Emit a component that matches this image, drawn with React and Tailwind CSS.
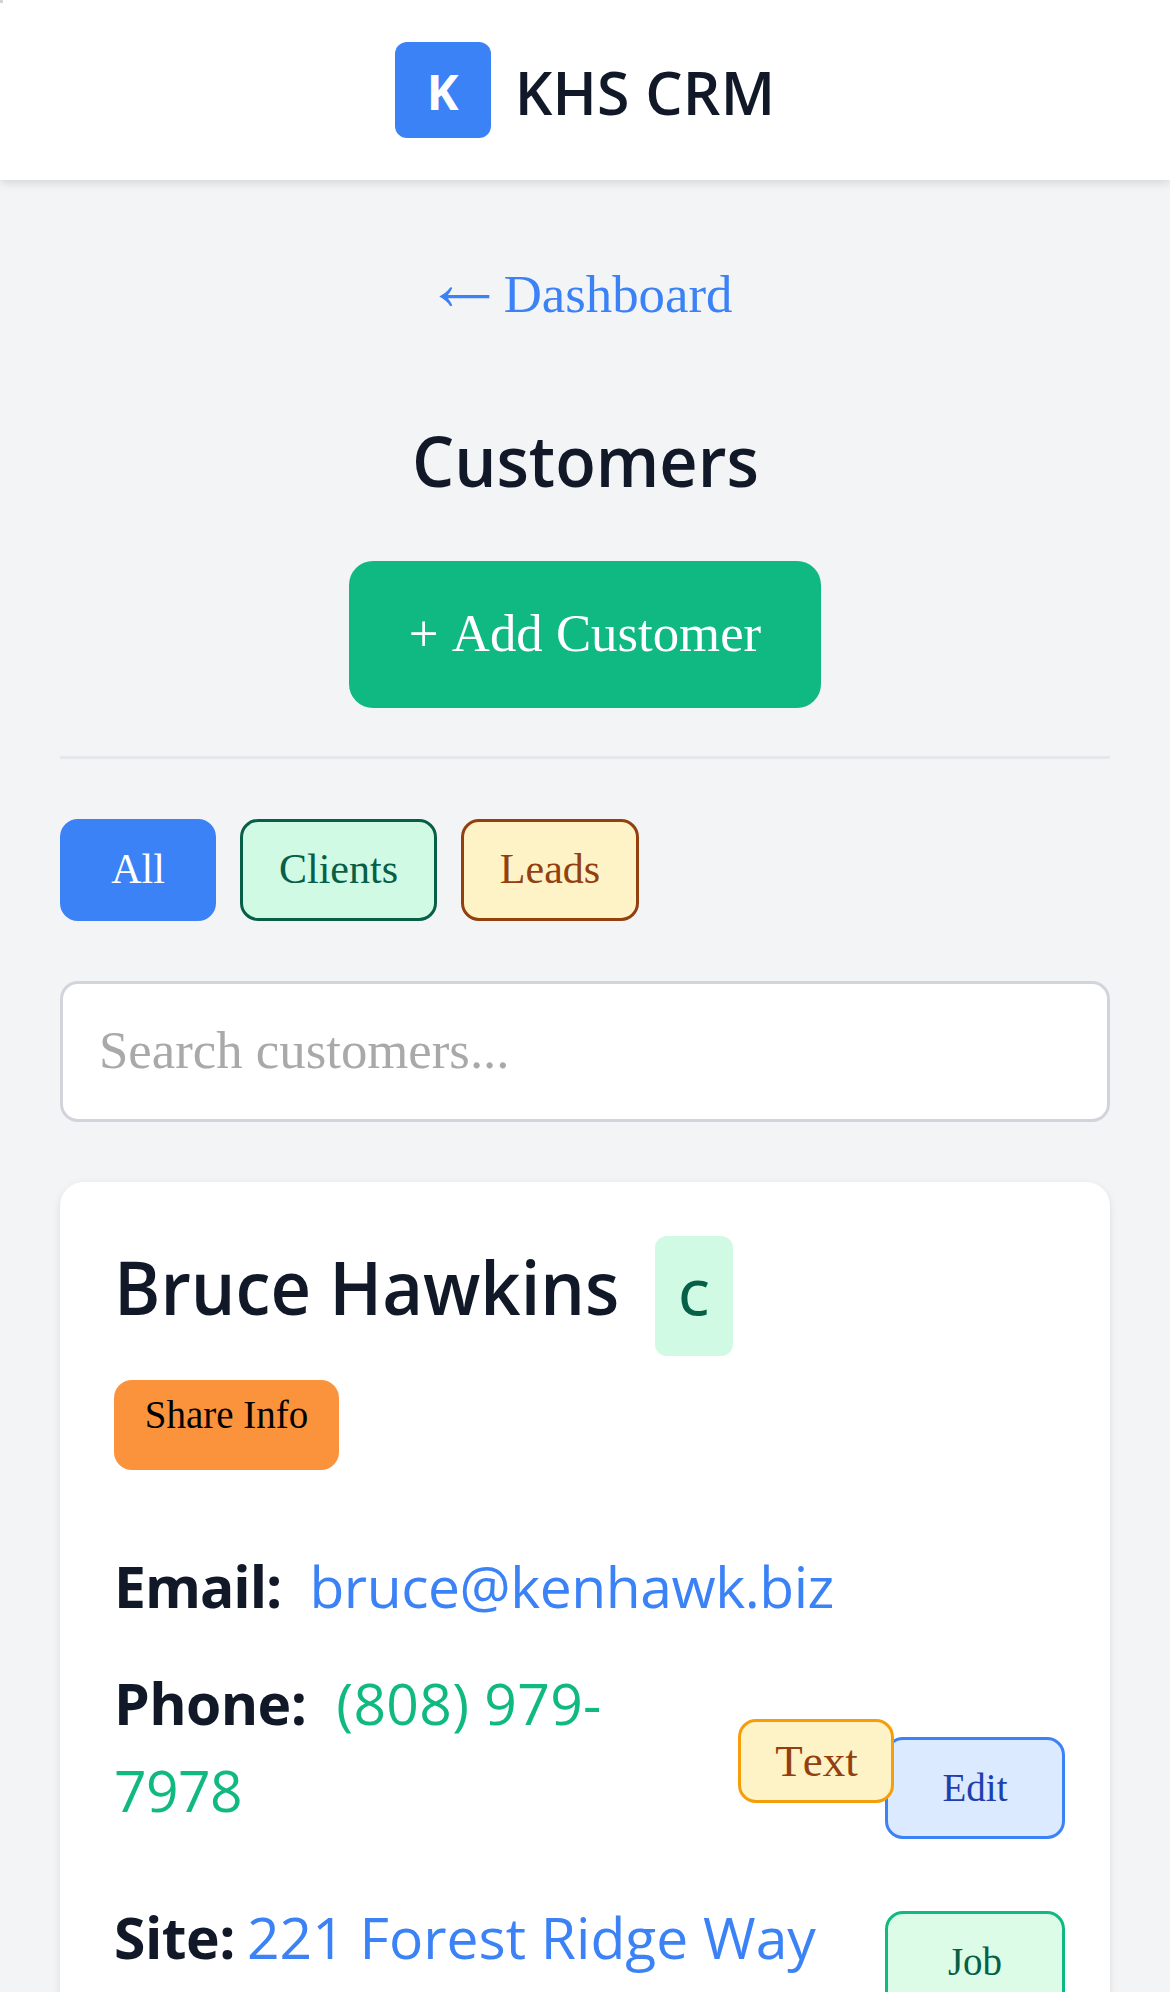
const serif = 'font-["Liberation_Serif",serif] [font-kerning:none]';

function Filter({ className, children }) {
  return (
    <button className={`flex h-[102px] items-center justify-center rounded-[18px] border-[3px] pb-[3px] text-[42px] leading-none ${serif} ${className}`}>
      {children}
    </button>
  );
}

function Action({ className, children }) {
  return (
    <button className={`flex h-[102px] w-[180px] shrink-0 items-center justify-center rounded-[18px] border-[3px] pb-0.5 text-[39px] leading-none ${serif} ${className}`}>
      {children}
    </button>
  );
}

function BackArrow() {
  return (
    <svg viewBox="0 0 53 20" className="mr-[13px] mt-1.5 h-5 w-[53px]" fill="currentColor" aria-hidden="true">
      <path d="M1.3 9.6C6 7.2 9.6 4 12.4 0.3L14.4 0.8C13 3.6 11.6 6 9.8 8H51.3V11.3H9.8C11.6 13.3 13 15.8 14.4 18.6L12.4 19.2C9.6 15.4 6 12.1 1.3 9.6Z" />
    </svg>
  );
}

function Header() {
  return (
    <header className="relative flex h-[180px] items-center justify-center bg-white shadow-[0_3px_9px_rgba(0,0,0,0.12)]">
      <span className="absolute left-0 top-0 size-[3px] bg-[#d3d3d3]" />
      <div className="mr-6 flex size-24 items-center justify-center rounded-xl bg-[#3b82f6] pt-1 text-[48px] font-bold leading-none text-white">
        K
      </div>
      <h1 className="mt-1 whitespace-nowrap text-[59px] font-semibold leading-none tracking-[0.2px]">KHS CRM</h1>
    </header>
  );
}

function CustomerCard() {
  return (
    <article className="mt-[60px] h-[900px] rounded-3xl bg-white pl-[54px] pr-[45px] pt-[54px] shadow-[0_3px_9px_rgba(0,0,0,0.1)]">
      <div className="flex h-[120px] items-start">
        <h3 className="w-[541px] origin-left scale-x-[0.951] whitespace-nowrap text-[74px] font-semibold leading-[101px]">Bruce Hawkins</h3>
        <span className="flex h-[120px] w-[78px] items-center justify-center rounded-xl bg-[#d1fae5] pt-0.5 text-[49px] font-semibold leading-none text-[#065f46]">
          C
        </span>
      </div>
      <button className={`mt-6 block h-[90px] w-[225px] rounded-[18px] bg-[#fb923c] pb-[21px] text-[39px] leading-[69px] text-black ${serif}`}>
        Share Info
      </button>

      <div className="mt-[73px] flex justify-between text-[57px] leading-[87px]">
        <div className="w-[780px] shrink-0">
          <p className="flex gap-[28px] whitespace-nowrap">
            <strong className="tracking-[-1px]">Email:</strong>
            <a className="tracking-[-0.45px] text-[#3b82f6]">bruce@kenhawk.biz</a>
          </p>
          <div className="mt-[30px] flex items-start justify-between">
            <p className="whitespace-nowrap">
              <strong className="mr-[30px] tracking-[-0.6px]">Phone:</strong>
              <a className="text-[#10b981]">
                <span className="tracking-[0.3px]">(808) 979-</span>
                <br />
                <span className="tracking-[-0.6px]">7978</span>
              </a>
            </p>
            <button className={`relative z-10 mt-[59px] flex h-[84px] w-[156px] items-center justify-center rounded-[18px] border-[3px] border-[#f59e0b] bg-[#fef3c7] pl-px text-[45px] leading-none text-[#92400e] ${serif}`}>
              Text
            </button>
          </div>
          <p className="mt-[60px] flex gap-[12px] whitespace-nowrap">
            <strong className="tracking-[-0.5px]">Site:</strong>
            <a className="text-[#3b82f6]">221 Forest Ridge Way</a>
          </p>
        </div>
        <div className="-ml-[9px] mt-[194px] flex shrink-0 flex-col gap-[72px]">
          <Action className="border-[#3b82f6] bg-[#dbeafe] text-[#1e40af]">Edit</Action>
          <Action className="border-[#10b981] bg-[#dcfce7] text-[#065f46]">Job</Action>
        </div>
      </div>
    </article>
  );
}

export default function App() {
  return (
    <div className='h-[1992px] w-[1170px] overflow-hidden bg-[#f3f4f6] font-["Open_Sans",sans-serif] text-[#111827]'>
      <Header />
      <main className="px-[60px]">
        <div className="flex flex-col items-center border-b-[3px] border-[#e5e7eb] pb-12 pt-[84px]">
          <a className={`flex items-center text-[52.8px] leading-[60px] text-[#3b82f6] ${serif}`}>
            <BackArrow />
            Dashboard
          </a>
          <h2 className="mt-[91px] scale-x-[0.951] whitespace-nowrap text-[70px] font-semibold leading-[90px]">Customers</h2>
          <button className={`mt-[56px] flex h-[147px] w-[472px] items-center justify-center rounded-3xl bg-[#10b981] pb-0.5 text-[52.8px] leading-none text-white ${serif}`}>
            + Add Customer
          </button>
        </div>
        <div className="mt-[60px] flex gap-6">
          <Filter className="w-[156px] border-[#3b82f6] bg-[#3b82f6] text-white">All</Filter>
          <Filter className="w-[197px] border-[#065f46] bg-[#d1fae5] text-[#065f46]">Clients</Filter>
          <Filter className="w-[178px] border-[#92400e] bg-[#fef3c7] text-[#92400e]">Leads</Filter>
        </div>
        <input
          placeholder="Search customers..."
          className={`mt-[60px] block h-[141px] w-full rounded-[18px] border-[3px] border-[#d1d5db] bg-white px-9 pb-[3px] text-[52.8px] placeholder:text-[#a9a9a9] ${serif}`}
        />
        <CustomerCard />
      </main>
    </div>
  );
}
